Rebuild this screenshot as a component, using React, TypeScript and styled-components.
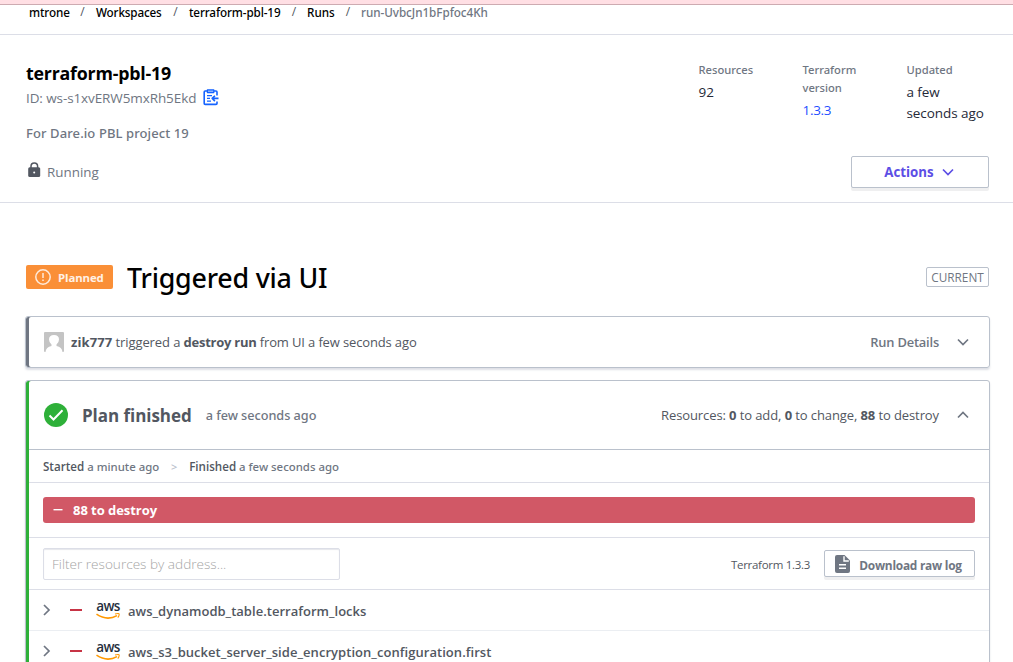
import React from 'react';
import styled, { createGlobalStyle } from 'styled-components';

const Global = createGlobalStyle`
  * { box-sizing: border-box; }
  html { overflow: hidden; }
  body {
    margin: 0;
    background: #fff;
    color: #525761;
    font-family: 'Open Sans', 'Noto Sans', sans-serif;
  }
  svg { display: block; flex: none; }
`;

interface TextProps {
  $size: number;
  $weight?: number;
  $color?: string;
  $track?: number;
  $line?: number;
  $drop?: number;
}

const Text = styled.span<TextProps>`
  padding-top: ${(p) => p.$drop ?? 0}px;
  font-family: ${(p) => (p.$weight === 500 ? "'Noto Sans'" : "'Open Sans'")}, sans-serif;
  font-size: ${(p) => p.$size}px;
  font-weight: ${(p) => p.$weight ?? 400};
  color: ${(p) => p.$color ?? '#525761'};
  letter-spacing: ${(p) => p.$track ?? 0}px;
  line-height: ${(p) => p.$line ?? 20}px;
  white-space: pre;
`;

const Page = styled.div`
  width: 1013px;
  height: 662px;
  overflow: hidden;
`;

const Notice = styled.div`
  height: 5px;
  background: #ffdfe4;
  border-bottom: 1px solid #cdabb1;
`;

const Breadcrumbs = styled.nav`
  display: flex;
  height: 30px;
  padding: 0 0 15px 29px;
  align-items: center;
  border-bottom: 1px solid #dcdee7;
`;

const Crumb = styled(Text)<{ $width: number }>`
  width: ${(p) => p.$width}px;
`;

const Slash = styled(Text)<{ $gap: number }>`
  width: ${(p) => p.$gap}px;
  text-align: center;
`;

const Header = styled.header`
  display: flex;
  justify-content: space-between;
  height: 168px;
  padding: 26px 24px 14px 26px;
  border-bottom: 1px solid #dcdee7;
`;

const Summary = styled.div`
  display: flex;
  flex-direction: column;
`;

const Title = styled(Text)`
  margin: 0;
`;

const IdRow = styled.div`
  display: flex;
  align-items: center;
  gap: 7px;
  height: 24px;
`;

const Description = styled(Text)`
  margin-top: 13px;
`;

const Status = styled.div`
  display: flex;
  align-items: center;
  gap: 6px;
  margin-top: 18px;
  padding-left: 1px;
  height: 20px;
`;

const HeaderSide = styled.div`
  display: flex;
  flex-direction: column;
  justify-content: space-between;
  align-items: flex-end;
`;

const Stats = styled.div`
  display: grid;
  grid-template-columns: 60px 60px 82.5px;
  column-gap: 44px;
`;

const Stat = styled.div`
  display: flex;
  flex-direction: column;
  gap: 3px;
`;

const OutlineButton = styled.button<{ $width: number; $height: number; $gap: number }>`
  display: flex;
  align-items: center;
  justify-content: center;
  gap: ${(p) => p.$gap}px;
  width: ${(p) => p.$width}px;
  height: ${(p) => p.$height}px;
  padding: 0 2px 0 0;
  background: #fff;
  border: 1px solid #bac1cc;
  border-radius: 2px;
  box-shadow: 0 3px 0 #efeff0;
  font-family: inherit;
`;

const RunHeading = styled.div`
  display: flex;
  align-items: center;
  height: 40px;
  margin: 54px 24px 19px 26px;
`;

const Badge = styled.span`
  display: flex;
  align-items: center;
  gap: 7px;
  width: 87px;
  height: 24px;
  margin-bottom: 1px;
  padding-left: 9px;
  border-radius: 2px;
  background: #fa8f37;
`;

const RunTitle = styled(Text)`
  margin: 0 auto 0 14px;
`;

const CurrentTag = styled.span`
  display: flex;
  align-items: center;
  justify-content: center;
  width: 63px;
  height: 20px;
  border: 1px solid #bac1cc;
  border-radius: 2px;
`;

const Card = styled.section<{ $accent: string }>`
  margin: 0 23px 12px 25px;
  padding-left: 3px;
  border: 1px solid #bac1cc;
  border-radius: 3px;
  box-shadow: inset 3px 0 0 ${(p) => p.$accent}, 0 2px 2px rgba(90, 100, 130, 0.2);
`;

const CardHead = styled.div<{ $height: number; $divided?: boolean }>`
  display: flex;
  align-items: center;
  height: ${(p) => p.$height}px;
  padding: 0 20px 0 15px;
  border-bottom: ${(p) => (p.$divided ? '1px solid #bac1cc' : '0')};
`;

const Avatar = styled.span`
  margin-right: 7px;
`;

const PlanTitle = styled(Text)`
  margin: 0 14px;
`;

const HeadRight = styled.div`
  display: flex;
  align-items: center;
  gap: 18px;
  margin-left: auto;
`;

const Timing = styled.div`
  display: flex;
  align-items: center;
  height: 33px;
  padding: 1px 0 0 14px;
  border-bottom: 1px solid #dcdee7;
`;

const Arrow = styled(Text)`
  width: 30px;
  text-align: center;
`;

const BarRow = styled.div`
  height: 55px;
  padding: 14px 14px 0;
  border-bottom: 1px solid #dcdee7;
`;

const DestroyBar = styled.div`
  display: flex;
  align-items: center;
  gap: 10px;
  height: 26px;
  padding-left: 10px;
  border-radius: 3px;
  background: #d15866;
`;

const Toolbar = styled.div`
  display: flex;
  align-items: center;
  height: 52px;
  padding: 0 14px;
  border-bottom: 1px solid #dcdee7;
`;

const Filter = styled.input`
  width: 297px;
  height: 32px;
  margin-right: auto;
  padding: 0 8px;
  border: 1px solid #dcdee7;
  border-radius: 2px;
  box-shadow: inset 0 1px 1px #e6e7ec;
  outline: none;
  font: 300 13.6px 'Open Sans', sans-serif;
  color: #525761;
  &::placeholder {
    color: #a5a5a5;
    opacity: 1;
  }
`;

const Version = styled(Text)`
  margin-right: 14px;
`;

const ResourceRow = styled.div`
  display: flex;
  align-items: center;
  height: 41px;
  padding-left: 13px;
  border-bottom: 1px solid #ebeef2;
`;

const Minus = styled.span`
  width: 12px;
  height: 2px;
  margin: 0 14px 1px 19px;
  background: #c73445;
`;

const Aws = styled.span`
  display: flex;
  flex-direction: column;
  align-items: center;
  gap: 1px;
  width: 24px;
  height: 18px;
  margin: -1px 8px 0 0;
`;

const Chevron = ({ d, color, w = 12, h = 12 }: { d: string; color: string; w?: number; h?: number }) => (
  <svg width={w} height={h} viewBox={`0 0 ${w} ${h}`} fill="none" stroke={color} strokeWidth="1.7">
    <path d={d} />
  </svg>
);

const ClipboardIcon = () => (
  <svg width="16" height="18" viewBox="0 0 16 18" fill="none" stroke="#1563ff" strokeWidth="1.6" strokeLinejoin="round">
    <path d="M14 6.4V3Q14 2 13 2H2.2Q1.2 2 1.2 3V14.4Q1.2 15.4 2.2 15.4H13Q14 15.4 14 14.4V12.4" />
    <path d="M4.4 0.8H10.8V3.6H4.4Z" fill="#8db4ff" strokeWidth="1.2" />
    <path d="M4 6.6H9M4 9.4H7M4 12.2H8" strokeWidth="1.3" />
    <path d="M15.5 9.4H9.4M11.9 6.7L9.2 9.4L11.9 12.1" />
  </svg>
);

const LockIcon = () => (
  <svg width="14" height="18" viewBox="0 0 14 18">
    <path d="M4 6.5V4.2a3.3 3.3 0 0 1 6.6 0V6.5" fill="none" stroke="#525761" strokeWidth="1.5" />
    <rect x="1.2" y="5.2" width="12" height="9.8" rx="1.5" fill="#525761" />
    <circle cx="7.2" cy="10.4" r="1" fill="#fff" />
  </svg>
);

const AwsLogo = () => (
  <Aws>
    <Text $size={13.5} $weight={600} $color="#252f3e" $track={-0.6} $line={11}>aws</Text>
    <svg width="24" height="7" viewBox="0 0 24 7" fill="none" stroke="#ff9900">
      <path d="M0.5 1.2Q11 8.2 21 2.6" strokeWidth="1.6" />
      <path d="M19 1Q23.2 0 23.2 1.2Q23.2 3 21.8 4.6" strokeWidth="1.1" />
    </svg>
  </Aws>
);

const crumbs: { name: string; width: number; gap: number; track: number }[] = [
  { name: 'mtrone', width: 40, gap: 27, track: -0.1 },
  { name: 'Workspaces', width: 66, gap: 27, track: -0.15 },
  { name: 'terraform-pbl-19', width: 92, gap: 26, track: -0.12 },
  { name: 'Runs', width: 28, gap: 26, track: 0 },
];

const resources = [
  { name: 'aws_dynamodb_table.terraform_locks', track: 0.02 },
  { name: 'aws_s3_bucket_server_side_encryption_configuration.first', track: 0.05 },
];

export default function App() {
  return (
    <Page>
      <Global />
      <Notice />
      <Breadcrumbs>
        {crumbs.map((c) => (
          <React.Fragment key={c.name}>
            <Crumb $size={11.7} $weight={500} $color="#000" $track={c.track} $width={c.width}>{c.name}</Crumb>
            <Slash $size={12} $gap={c.gap}>/</Slash>
          </React.Fragment>
        ))}
        <Text $size={11.7} $weight={500} $color="#6f7682" $track={-0.04}>run-UvbcJn1bFpfoc4Kh</Text>
      </Breadcrumbs>

      <Header>
        <Summary>
          <Title as="h1" $size={17.8} $weight={700} $color="#000" $track={-0.2} $line={25}>terraform-pbl-19</Title>
          <IdRow>
            <Text $size={13.5} $track={-0.1} $color="#6f7682">ID: ws-s1xvERW5mxRh5Ekd</Text>
            <ClipboardIcon />
          </IdRow>
          <Description $size={13} $weight={500} $color="#6f7682" $track={0.1}>For Dare.io PBL project 19</Description>
          <Status>
            <LockIcon />
            <Text $size={13.4} $color="#6f7682" $drop={1}>Running</Text>
          </Status>
        </Summary>
        <HeaderSide>
          <Stats>
            <Stat>
              <Text $size={11.2} $weight={500} $color="#6f7682" $line={18}>Resources</Text>
              <Text $size={13.5} $color="#252937" $line={21}>92</Text>
            </Stat>
            <Stat>
              <Text $size={11.2} $weight={500} $color="#6f7682" $line={18}>{'Terraform\nversion'}</Text>
              <Text $size={13.5} $color="#1f4fff" $track={-0.3} $line={21}>1.3.3</Text>
            </Stat>
            <Stat>
              <Text $size={11.2} $weight={500} $color="#6f7682" $line={18}>Updated</Text>
              <Text $size={13.5} $color="#252937" $track={-0.07} $line={21}>{'a few\nseconds ago'}</Text>
            </Stat>
          </Stats>
          <OutlineButton $width={138} $height={32} $gap={8}>
            <Text $size={13.3} $weight={700} $color="#5c4ee5">Actions</Text>
            <Chevron d="M1 3.5L6 8.5L11 3.5" color="#5c4ee5" />
          </OutlineButton>
        </HeaderSide>
      </Header>

      <RunHeading>
        <Badge>
          <svg width="16" height="16" viewBox="0 0 16 16" fill="none" stroke="#feeadb" strokeWidth="1.5">
            <circle cx="8" cy="8" r="7.2" />
            <path d="M8 4V9M8 10.6V12" />
          </svg>
          <Text $size={11.4} $weight={700} $color="#fff1e6" $track={-0.1} $drop={2}>Planned</Text>
        </Badge>
        <RunTitle as="h2" $size={26.8} $weight={500} $color="#000" $track={-0.2} $line={40} $drop={2}>Triggered via UI</RunTitle>
        <CurrentTag>
          <Text $size={11.8} $color="#6f7682" $line={18}>CURRENT</Text>
        </CurrentTag>
      </RunHeading>

      <Card $accent="#6f7682">
        <CardHead $height={50}>
          <Avatar>
            <svg width="20" height="20" viewBox="0 0 20 20">
              <rect width="20" height="20" rx="1" fill="#c4c4c4" />
              <path d="M1.5 20Q2 15 7.5 14V12.5Q5 10.5 5 7.5Q5 3 10 3Q15 3 15 7.5Q15 10.5 12.5 12.5V14Q18 15 18.5 20Z" fill="#fff" />
            </svg>
          </Avatar>
          <Text $size={13} $weight={700} $track={0.1}>zik777</Text>
          <Text $size={13} $track={-0.1}> triggered a </Text>
          <Text $size={13} $weight={700} $track={-0.25}>destroy run</Text>
          <Text $size={13} $track={-0.14}> from UI a few seconds ago</Text>
          <HeadRight>
            <Text $size={12.9} $weight={600} $color="#6f7682" $track={-0.2}>Run Details</Text>
            <Chevron d="M1 3.5L6 8.5L11 3.5" color="#6f7682" />
          </HeadRight>
        </CardHead>
      </Card>

      <Card $accent="#2eb039">
        <CardHead $height={69} $divided>
          <svg width="24" height="24" viewBox="0 0 24 24">
            <circle cx="12" cy="12" r="12" fill="#2eb039" />
            <path d="M5.5 12.5L9.5 16.5L18.5 7.2" fill="none" stroke="#fff" strokeWidth="2" />
          </svg>
          <PlanTitle as="h3" $size={17} $weight={700} $track={-0.05} $drop={1}>Plan finished</PlanTitle>
          <Text $size={12.7} $weight={500} $color="#6f7682" $track={-0.03}>a few seconds ago</Text>
          <HeadRight>
            <Text $size={13} $track={-0.1}>
              Resources: <b>0</b> to add, <b>0</b> to change, <b>88</b> to destroy
            </Text>
            <Chevron d="M1 8.5L6 3.5L11 8.5" color="#6f7682" />
          </HeadRight>
        </CardHead>
        <Timing>
          <Text $size={11.6} $weight={600}>Started</Text>
          <Text $size={11.4} $weight={500} $color="#6f7682"> a minute ago</Text>
          <Arrow $size={11} $weight={600} $color="#bac1cc">&gt;</Arrow>
          <Text $size={11.6} $weight={600}>Finished</Text>
          <Text $size={11.4} $weight={500} $color="#6f7682"> a few seconds ago</Text>
        </Timing>
        <BarRow>
          <DestroyBar>
            <svg width="10" height="10" viewBox="0 0 10 10" stroke="#fff" strokeWidth="1.4">
              <path d="M0.5 4.7H9.5" />
            </svg>
            <Text $size={13} $weight={700} $color="#fff" $track={-0.05}>88 to destroy</Text>
          </DestroyBar>
        </BarRow>
        <Toolbar>
          <Filter placeholder="Filter resources by address..." />
          <Version $size={11.5} $track={-0.3} $drop={2}>Terraform 1.3.3</Version>
          <OutlineButton $width={151} $height={27} $gap={9}>
            <svg width="15" height="18" viewBox="0 0 15 18">
              <path d="M2 0H9.5L15 5.5V16Q15 18 13 18H2Q0 18 0 16V2Q0 0 2 0Z" fill="#6f7682" />
              <path d="M9 1.2V6H13.8M4 9.8H11M4 13.2H11" fill="none" stroke="#fff" strokeWidth="1.4" />
            </svg>
            <Text $size={11.9} $weight={700} $color="#6f7682" $track={-0.25} $drop={2}>Download raw log</Text>
          </OutlineButton>
        </Toolbar>
        {resources.map((r) => (
          <ResourceRow key={r.name}>
            <Chevron d="M2 1L7 6L2 11" color="#6f7682" w={9} />
            <Minus />
            <AwsLogo />
            <Text $size={13} $weight={600} $track={r.track} $drop={2}>{r.name}</Text>
          </ResourceRow>
        ))}
      </Card>
    </Page>
  );
}
